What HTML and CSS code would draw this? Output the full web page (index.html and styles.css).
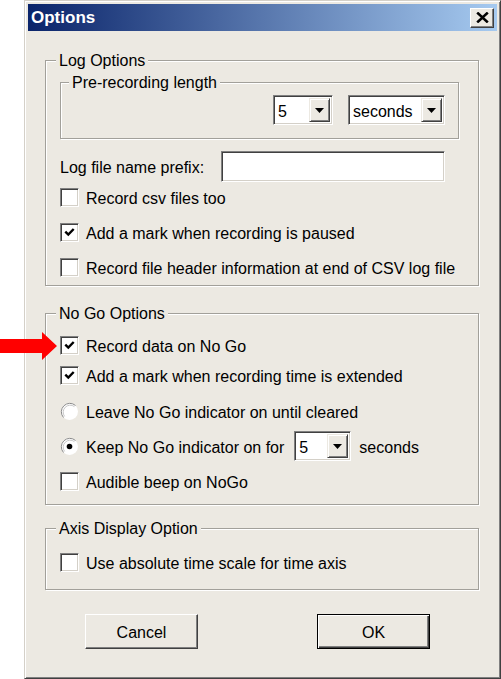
FILE: index.html
```html
<!DOCTYPE html>
<html>
<head>
<meta charset="utf-8">
<title>Options</title>
<link rel="stylesheet" href="styles.css">
</head>
<body>
<div class="window">
  <div class="titlebar">
    <span class="title">Options</span>
    <span class="close"><svg width="13" height="11" viewBox="0 0 13 11"><path d="M1.2 0.6 L11.8 10.4 M11.8 0.6 L1.2 10.4" stroke="#000" stroke-width="2.6"/></svg></span>
  </div>
  <div class="client">
    <fieldset class="group group-log">
      <legend>Log Options</legend>
      <fieldset class="group group-pre">
        <legend>Pre-recording length</legend>
        <div class="combos">
          <div class="combo combo-num"><span class="combo-value">5</span><span class="combo-btn"><svg width="9" height="5" viewBox="0 0 9 5"><polygon points="0,0 9,0 4.5,5" fill="#000"/></svg></span></div>
          <div class="combo combo-unit"><span class="combo-value">seconds</span><span class="combo-btn"><svg width="9" height="5" viewBox="0 0 9 5"><polygon points="0,0 9,0 4.5,5" fill="#000"/></svg></span></div>
        </div>
      </fieldset>
      <div class="prefix-row"><span class="label">Log file name prefix:</span><div class="textbox"></div></div>
      <div class="rows rows-log">
        <div class="row"><span class="checkbox"></span><span class="label">Record csv files too</span></div>
        <div class="row"><span class="checkbox"><svg width="11" height="10" viewBox="0 0 11 10"><polyline points="1.3,4.6 4.3,7.6 9.7,2" fill="none" stroke="#000" stroke-width="2.4"/></svg></span><span class="label">Add a mark when recording is paused</span></div>
        <div class="row"><span class="checkbox"></span><span class="label">Record file header information at end of CSV log file</span></div>
      </div>
    </fieldset>

    <fieldset class="group group-nogo">
      <legend>No Go Options</legend>
      <div class="rows rows-nogo">
        <div class="row"><span class="checkbox"><svg width="11" height="10" viewBox="0 0 11 10"><polyline points="1.3,4.6 4.3,7.6 9.7,2" fill="none" stroke="#000" stroke-width="2.4"/></svg></span><span class="label">Record data on No Go</span></div>
        <div class="row"><span class="checkbox"><svg width="11" height="10" viewBox="0 0 11 10"><polyline points="1.3,4.6 4.3,7.6 9.7,2" fill="none" stroke="#000" stroke-width="2.4"/></svg></span><span class="label">Add a mark when recording time is extended</span></div>
        <div class="row row-spaced"><span class="radio"><svg width="19" height="19" viewBox="0 0 19 19"><circle cx="9.5" cy="9.5" r="8.5" fill="#fff"/><path d="M3.5 15.5 A8.5 8.5 0 0 1 15.5 3.5" fill="none" stroke="#8a8a8a" stroke-width="1"/><path d="M4.6 14.4 A7 7 0 0 1 14.4 4.6" fill="none" stroke="#c8c8c8" stroke-width="1"/></svg></span><span class="label">Leave No Go indicator on until cleared</span></div>
        <div class="row row-tall"><span class="radio"><svg width="19" height="19" viewBox="0 0 19 19"><circle cx="9.5" cy="9.5" r="8.5" fill="#fff"/><path d="M3.5 15.5 A8.5 8.5 0 0 1 15.5 3.5" fill="none" stroke="#8a8a8a" stroke-width="1"/><path d="M4.6 14.4 A7 7 0 0 1 14.4 4.6" fill="none" stroke="#c8c8c8" stroke-width="1"/><circle cx="9.5" cy="9.5" r="2.8" fill="#000"/></svg></span><span class="label keep-label">Keep No Go indicator on for</span><div class="combo combo-keep"><span class="combo-value">5</span><span class="combo-btn"><svg width="9" height="5" viewBox="0 0 9 5"><polygon points="0,0 9,0 4.5,5" fill="#000"/></svg></span></div><span class="label keep-unit">seconds</span></div>
        <div class="row"><span class="checkbox"></span><span class="label">Audible beep on NoGo</span></div>
      </div>
    </fieldset>

    <fieldset class="group group-axis">
      <legend>Axis Display Option</legend>
      <div class="rows">
        <div class="row"><span class="checkbox"></span><span class="label">Use absolute time scale for time axis</span></div>
      </div>
    </fieldset>

    <div class="buttons">
      <button class="btn">Cancel</button>
      <button class="btn btn-default">OK</button>
    </div>
  </div>
</div>
<svg class="arrow" width="58" height="30" viewBox="0 0 58 30"><polygon points="0,8 42,8 42,1 57,15 42,29 42,22 0,22" fill="#f00"/></svg>
</body>
</html>
```

FILE: styles.css
```css
html, body {
  margin: 0;
  background: #fff;
  overflow: hidden;
}
body {
  font-family: "Liberation Sans", Arial, sans-serif;
  font-size: 16px;
  color: #000;
  position: relative;
}
.window {
  margin-left: 24px;
  width: 477px;
  height: 679px;
  box-sizing: border-box;
  background: #ece9e2;
  border: 1px solid;
  border-color: #d4d0c8 #404040 #404040 #d4d0c8;
  box-shadow: inset 1px 1px #fff, inset -1px -1px #808080;
  padding: 3px;
}
.titlebar {
  height: 27px;
  display: flex;
  align-items: center;
  justify-content: space-between;
  background: linear-gradient(to right, #0a246a, #a6caf0);
  padding: 0 3px 0 3px;
}
.title {
  color: #fff;
  font-weight: bold;
  font-size: 17px;
  padding-top: 1px;
}
.close {
  width: 24px;
  height: 20px;
  box-sizing: border-box;
  background: #ece9e2;
  border: 1px solid;
  border-color: #fff #404040 #404040 #fff;
  box-shadow: inset -1px -1px #808080;
  display: flex;
  align-items: center;
  justify-content: center;
}
.client {
  padding: 20px 0 0 17px;
}
.group {
  margin: 0;
  border: 1px solid #a2a09a;
  box-shadow: inset 1px 1px #fff, 1px 1px #fff;
  min-width: 0;
  box-sizing: border-box;
}
.group legend {
  padding: 1px 3px 0;
  height: 18px;
  box-sizing: border-box;
  line-height: 18px;
  background: #ece9e2;
}
.group-log {
  width: 434px;
  padding: 4px 19px 8px 14px;
}
.group-log > legend,
.group-nogo > legend,
.group-axis > legend {
  margin-left: -4px;
}
.group-pre {
  padding: 4px 13px 13px 0;
}
.group-pre > legend {
  margin-left: 8px;
}
.combos {
  display: flex;
  justify-content: flex-end;
  gap: 15px;
}
.combo {
  height: 30px;
  box-sizing: border-box;
  display: flex;
  background: #fff;
  border: 1px solid;
  border-color: #808080 #fff #fff #808080;
  box-shadow: inset 1px 1px #404040, inset -1px -1px #d4d0c8;
  padding: 2px;
}
.combo-num { width: 60px; }
.combo-unit { width: 97px; }
.combo-keep { width: 57px; margin: 0 2px 0 1px; }
.combo-value {
  flex: 1;
  display: flex;
  align-items: center;
  padding: 3px 0 0 2px;
}
.combo-btn {
  width: 21px;
  box-sizing: border-box;
  background: #ece9e2;
  border: 1px solid;
  border-color: #ece9e2 #404040 #404040 #ece9e2;
  box-shadow: inset 1px 1px #fff, inset -1px -1px #808080;
  display: flex;
  align-items: center;
  justify-content: center;
}
.prefix-row {
  display: flex;
  align-items: center;
  margin-top: 12px;
}
.label {
  padding-top: 3px;
}
.textbox {
  width: 224px;
  height: 31px;
  box-sizing: border-box;
  margin-left: 17px;
  background: #fff;
  border: 1px solid;
  border-color: #808080 #fff #fff #808080;
  box-shadow: inset 1px 1px #404040, inset -1px -1px #d4d0c8;
}
.rows {
  display: flex;
  flex-direction: column;
  gap: 10px;
}
.rows-log {
  margin-top: 5px;
  gap: 15px;
}
.row {
  display: flex;
  align-items: center;
  height: 20px;
  gap: 7px;
}
.row-spaced { margin-top: 6px; }
.row-tall { height: 30px; gap: 0; }
.keep-label { margin: 0 9px 0 7px; }
.keep-unit { margin-left: 6px; }
.checkbox {
  width: 19px;
  height: 19px;
  box-sizing: border-box;
  background: #fff;
  border: 1px solid;
  border-color: #808080 #fff #fff #808080;
  box-shadow: inset 1px 1px #404040, inset -1px -1px #d4d0c8;
  display: flex;
  align-items: center;
  justify-content: center;
  flex: none;
}
.radio {
  width: 19px;
  height: 19px;
  display: flex;
  flex: none;
}
.group-nogo {
  width: 434px;
  margin-top: 18px;
  padding: 13px 14px 13px 14px;
}
.group-axis {
  width: 434px;
  margin-top: 14px;
  padding: 15px 14px 17px 14px;
}
.buttons {
  display: flex;
  gap: 119px;
  margin-top: 24px;
  padding-left: 40px;
}
.btn {
  width: 113px;
  height: 35px;
  box-sizing: border-box;
  margin: 0;
  padding: 2px 0 0;
  font: inherit;
  color: #000;
  background: #ece9e2;
  border: 1px solid;
  border-color: #fff #404040 #404040 #fff;
  box-shadow: inset -1px -1px #808080;
}
.btn-default {
  border-color: #000;
  box-shadow: inset 1px 1px #fff, inset -1px -1px #404040, inset -2px -2px #808080;
}
.arrow {
  position: absolute;
  left: 0;
  top: 331px;
}
```
